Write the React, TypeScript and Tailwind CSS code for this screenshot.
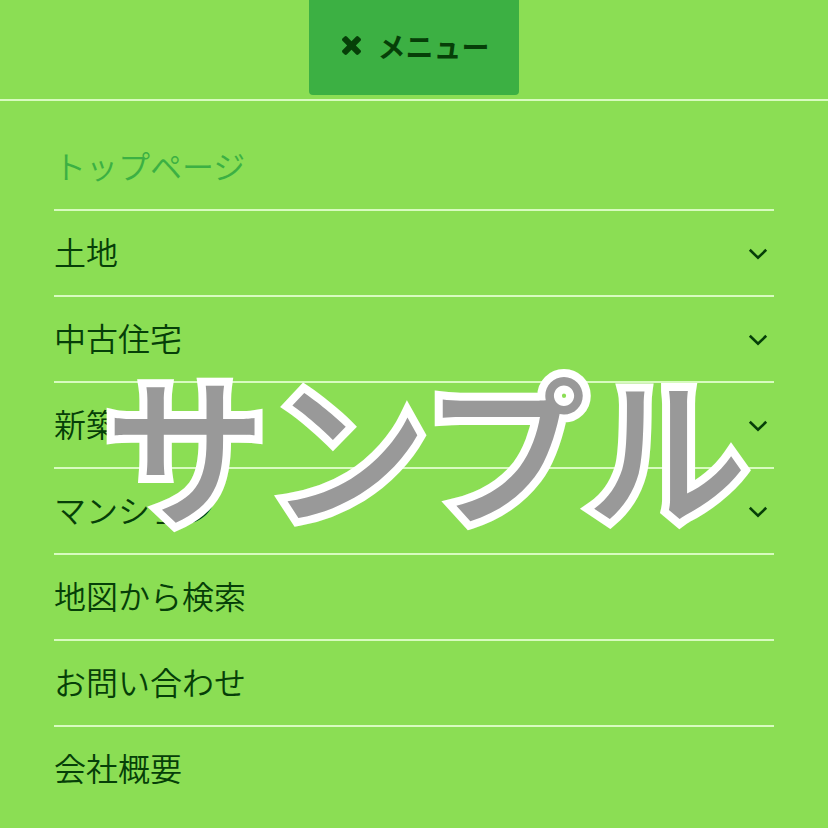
type Item = { label: string; active?: boolean; expandable?: boolean };

const items: Item[] = [
  { label: "トップページ", active: true },
  { label: "土地", expandable: true },
  { label: "中古住宅", expandable: true },
  { label: "新築", expandable: true },
  { label: "マンション", expandable: true },
  { label: "地図から検索" },
  { label: "お問い合わせ" },
  { label: "会社概要" },
];

function CloseIcon() {
  return (
    <svg viewBox="110 366 1188 1188" className="size-[19px]" fill="currentColor" aria-hidden="true">
      <path d="M1298 1322q0 40-28 68l-136 136q-28 28-68 28t-68-28l-294-294-294 294q-28 28-68 28t-68-28l-136-136q-28-28-28-68t28-68l294-294-294-294q-28-28-28-68t28-68l136-136q28-28 68-28t68 28l294 294 294-294q28-28 68-28t68 28l136 136q28 28 28 68t-28 68l-294 294 294 294q28 28 28 68z" />
    </svg>
  );
}

function Chevron() {
  return (
    <svg viewBox="0 0 20 12" className="h-3 w-5" fill="none" stroke="currentColor" strokeWidth="2.6" aria-hidden="true">
      <path d="M1.8 1.8 10 9.8 18.2 1.8" />
    </svg>
  );
}

export default function App() {
  return (
    <div className="relative min-h-screen overflow-hidden bg-[#8bde54] font-['Noto_Sans_CJK_JP',sans-serif] text-[#063f08]">
      <header className="flex h-[101px] items-start justify-center border-b-2 border-[#d8fbc0]">
        <button type="button" className="flex h-[95px] w-[210px] items-center justify-center gap-4 rounded-b bg-[#3cb043] pb-1 pl-1 text-[28px] font-bold">
          <CloseIcon />
          メニュー
        </button>
      </header>
      <nav className="px-[54px] pt-6" aria-label="メニュー">
        <ul>
          {items.map((item) => (
            <li key={item.label} className="border-b-2 border-[#d8fbc0] last:border-b-0">
              <a href="#" className={`flex h-[84px] items-center justify-between pt-px pr-1.5 text-[32px] font-[350] ${item.active ? "text-[#3cb043]" : ""}`}>
                <span className="pb-1.5">{item.label}</span>
                {item.expandable && <Chevron />}
              </a>
            </li>
          ))}
        </ul>
      </nav>
      <p className="pointer-events-none absolute inset-x-0 top-[324px] pl-6 text-center text-[162px] leading-[240px] font-medium whitespace-nowrap text-[#999] [-webkit-text-stroke:16px_white] [paint-order:stroke_fill]">
        サンプル
      </p>
    </div>
  );
}
